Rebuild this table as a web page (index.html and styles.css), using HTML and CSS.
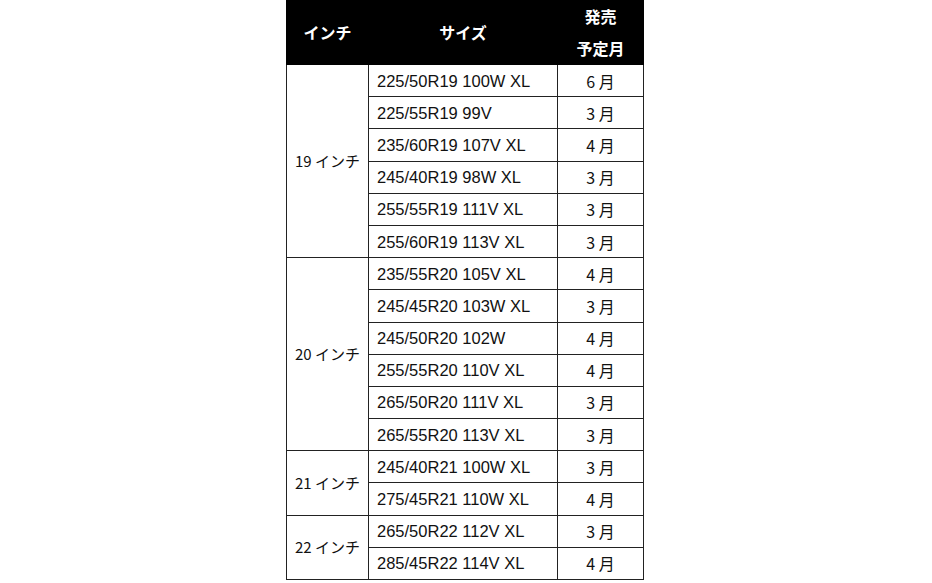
FILE: index.html
```html
<!DOCTYPE html>
<html lang="ja">
<head>
<meta charset="utf-8">
<link rel="stylesheet" href="styles.css">
</head>
<body>
<table class="tire-table">
  <thead>
    <tr>
      <th class="c-inch">インチ</th>
      <th class="c-size">サイズ</th>
      <th class="c-month">発売<br>予定月</th>
    </tr>
  </thead>
  <tbody>
    <tr><td class="inch" rowspan="6">19 インチ</td><td class="size">225/50R19 100W XL</td><td class="month">6 月</td></tr>
    <tr><td class="size">225/55R19 99V</td><td class="month">3 月</td></tr>
    <tr><td class="size">235/60R19 107V XL</td><td class="month">4 月</td></tr>
    <tr><td class="size">245/40R19 98W XL</td><td class="month">3 月</td></tr>
    <tr><td class="size">255/55R19 111V XL</td><td class="month">3 月</td></tr>
    <tr><td class="size">255/60R19 113V XL</td><td class="month">3 月</td></tr>
    <tr><td class="inch" rowspan="6">20 インチ</td><td class="size">235/55R20 105V XL</td><td class="month">4 月</td></tr>
    <tr><td class="size">245/45R20 103W XL</td><td class="month">3 月</td></tr>
    <tr><td class="size">245/50R20 102W</td><td class="month">4 月</td></tr>
    <tr><td class="size">255/55R20 110V XL</td><td class="month">4 月</td></tr>
    <tr><td class="size">265/50R20 111V XL</td><td class="month">3 月</td></tr>
    <tr><td class="size">265/55R20 113V XL</td><td class="month">3 月</td></tr>
    <tr><td class="inch" rowspan="2">21 インチ</td><td class="size">245/40R21 100W XL</td><td class="month">3 月</td></tr>
    <tr><td class="size">275/45R21 110W XL</td><td class="month">4 月</td></tr>
    <tr><td class="inch" rowspan="2">22 インチ</td><td class="size">265/50R22 112V XL</td><td class="month">3 月</td></tr>
    <tr><td class="size">285/45R22 114V XL</td><td class="month">4 月</td></tr>
  </tbody>
</table>
</body>
</html>
```
FILE: styles.css
```css
html, body {
  margin: 0;
  padding: 0;
  background: #fff;
}
body {
  padding-right: 2px;
}
.tire-table {
  margin: 0 auto;
  border-collapse: collapse;
  table-layout: fixed;
  width: 358px;
  font-family: "Noto Sans CJK JP", "Noto Sans", sans-serif;
  color: #111;
}
.tire-table th {
  background: #000;
  color: #fff;
  font-weight: 700;
  font-size: 16px;
  line-height: 31.5px;
  padding: 0;
  border: 1px solid #000;
  text-align: center;
}
.c-inch { width: 81px; }
.c-size { width: 188px; }
.c-month { width: 85px; }
.tire-table td {
  border: 1px solid #222;
  height: 31.2px;
  padding: 0;
  line-height: 20px;
  font-size: 16px;
}
.inch {
  text-align: center;
  font-size: 15px !important;
}
.size {
  font-family: "Liberation Sans", Arial, sans-serif;
  font-size: 16.5px !important;
  padding-left: 8px !important;
  text-align: left;
}
.month {
  text-align: center;
}
```
